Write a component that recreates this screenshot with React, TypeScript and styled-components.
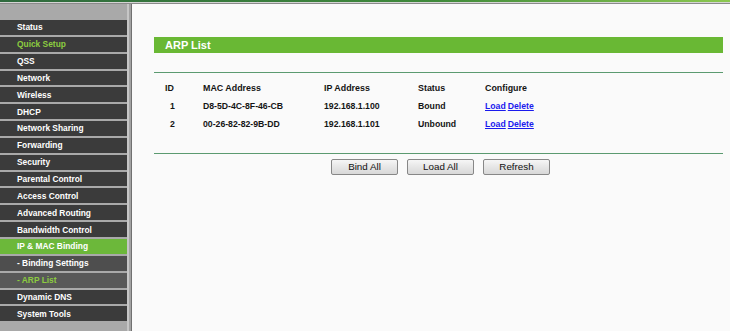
import styled, { createGlobalStyle } from 'styled-components';

const GlobalStyle = createGlobalStyle`
  html, body {
    margin: 0;
    padding: 0;
    height: 100%;
    background: #fafafa;
    font-family: "Liberation Sans", Arial, sans-serif;
  }
  #root {
    height: 100%;
  }
`;

type ItemKind = 'normal' | 'quick' | 'selected' | 'sub' | 'subActive';

interface MenuEntry {
  label: string;
  kind: ItemKind;
}

const MENU: MenuEntry[] = [
  { label: 'Status', kind: 'normal' },
  { label: 'Quick Setup', kind: 'quick' },
  { label: 'QSS', kind: 'normal' },
  { label: 'Network', kind: 'normal' },
  { label: 'Wireless', kind: 'normal' },
  { label: 'DHCP', kind: 'normal' },
  { label: 'Network Sharing', kind: 'normal' },
  { label: 'Forwarding', kind: 'normal' },
  { label: 'Security', kind: 'normal' },
  { label: 'Parental Control', kind: 'normal' },
  { label: 'Access Control', kind: 'normal' },
  { label: 'Advanced Routing', kind: 'normal' },
  { label: 'Bandwidth Control', kind: 'normal' },
  { label: 'IP & MAC Binding', kind: 'selected' },
  { label: '- Binding Settings', kind: 'sub' },
  { label: '- ARP List', kind: 'subActive' },
  { label: 'Dynamic DNS', kind: 'normal' },
  { label: 'System Tools', kind: 'normal' },
];

const ROWS = [
  { id: 1, mac: 'D8-5D-4C-8F-46-CB', ip: '192.168.1.100', status: 'Bound' },
  { id: 2, mac: '00-26-82-82-9B-DD', ip: '192.168.1.101', status: 'Unbound' },
];

const Page = styled.div`
  display: flex;
  flex-direction: column;
  height: 100%;
  min-height: 331px;
`;

const TopStrip = styled.div`
  height: 2px;
  flex: 0 0 auto;
  background: linear-gradient(to right, #2f6a3e, #3f8a3a 60%, #8cc850);
  border-bottom: 1px solid #d4d4d4;
  box-shadow: 0 1px 0 #8a8a8a;
  margin-bottom: 1px;
`;

const Body = styled.div`
  display: flex;
  flex: 1;
`;

const Sidebar = styled.nav`
  width: 127px;
  flex: 0 0 127px;
  background: #a9a9a9;
  padding-top: 16px;
  display: flex;
  flex-direction: column;
`;

const Divider = styled.div`
  width: 5px;
  flex: 0 0 5px;
  background: linear-gradient(
    to right,
    #c6c6c6 0 2px,
    #a2a2a2 2px 4px,
    #707070 4px 5px
  );
`;

const itemBg: Record<ItemKind, string> = {
  normal: '#3b3b3b',
  quick: '#3b3b3b',
  selected: '#6cb83a',
  sub: '#4e4e4e',
  subActive: '#585858',
};

const itemColor: Record<ItemKind, string> = {
  normal: '#ffffff',
  quick: '#8ccb40',
  selected: '#ffffff',
  sub: '#ffffff',
  subActive: '#8ccb40',
};

const MenuItem = styled.div<{ $kind: ItemKind }>`
  height: 14.85px;
  margin-bottom: 2px;
  padding-left: 17px;
  display: flex;
  align-items: center;
  background: ${({ $kind }) => itemBg[$kind]};
  color: ${({ $kind }) => itemColor[$kind]};
  font-size: 8.4px;
  font-weight: bold;
  white-space: nowrap;
`;

const Content = styled.main`
  flex: 1;
  background: #fafafa;
  padding: 33px 7px 0 22px;
`;

const TitleBar = styled.div`
  height: 16px;
  background: #69b834;
  color: #ffffff;
  font-size: 11px;
  font-weight: bold;
  padding-left: 11px;
  display: flex;
  align-items: center;
`;

const Rule = styled.div`
  height: 1px;
  background: #5b9a70;
`;

const TopRule = styled(Rule)`
  margin-top: 19px;
`;

const Table = styled.div`
  display: grid;
  grid-template-columns: 38px 121px 94px 67px 1fr;
  grid-auto-rows: 18px;
  align-items: center;
  padding: 6px 0 20px 11px;
  font-size: 8.7px;
  font-weight: bold;
  color: #141414;
`;

const HeadCell = styled.div`
  font-size: 8.9px;
  white-space: nowrap;
`;

const Cell = styled.div<{ $pad?: number }>`
  padding-left: ${({ $pad }) => $pad ?? 0}px;
  white-space: nowrap;
`;

const Link = styled.a`
  color: #1a1aee;
  text-decoration: underline;
  cursor: pointer;
  margin-right: 2px;
`;

const ButtonRow = styled.div`
  display: flex;
  gap: 9px;
  padding: 5px 0 0 177px;
`;

const Button = styled.button`
  width: 67px;
  height: 16px;
  padding: 0;
  border: 1px solid #878787;
  border-radius: 2px;
  background: linear-gradient(to bottom, #f6f6f6, #e6e6e6 50%, #d8d8d8);
  font-family: "Liberation Sans", Arial, sans-serif;
  font-size: 9.8px;
  color: #111;
  line-height: 14px;
`;

export default function App() {
  return (
    <Page>
      <GlobalStyle />
      <TopStrip />
      <Body>
        <Sidebar>
          {MENU.map((m) => (
            <MenuItem key={m.label} $kind={m.kind}>
              {m.label}
            </MenuItem>
          ))}
        </Sidebar>
        <Divider />
        <Content>
          <TitleBar>ARP List</TitleBar>
          <TopRule />
          <Table>
            <HeadCell>ID</HeadCell>
            <HeadCell>MAC Address</HeadCell>
            <HeadCell>IP Address</HeadCell>
            <HeadCell>Status</HeadCell>
            <HeadCell>Configure</HeadCell>
            {ROWS.flatMap((r) => [
              <Cell key={`id${r.id}`} $pad={5}>{r.id}</Cell>,
              <Cell key={`mac${r.id}`}>{r.mac}</Cell>,
              <Cell key={`ip${r.id}`}>{r.ip}</Cell>,
              <Cell key={`st${r.id}`}>{r.status}</Cell>,
              <Cell key={`cf${r.id}`}>
                <Link>Load</Link>
                <Link>Delete</Link>
              </Cell>,
            ])}
          </Table>
          <Rule />
          <ButtonRow>
            <Button>Bind All</Button>
            <Button>Load All</Button>
            <Button>Refresh</Button>
          </ButtonRow>
        </Content>
      </Body>
    </Page>
  );
}
